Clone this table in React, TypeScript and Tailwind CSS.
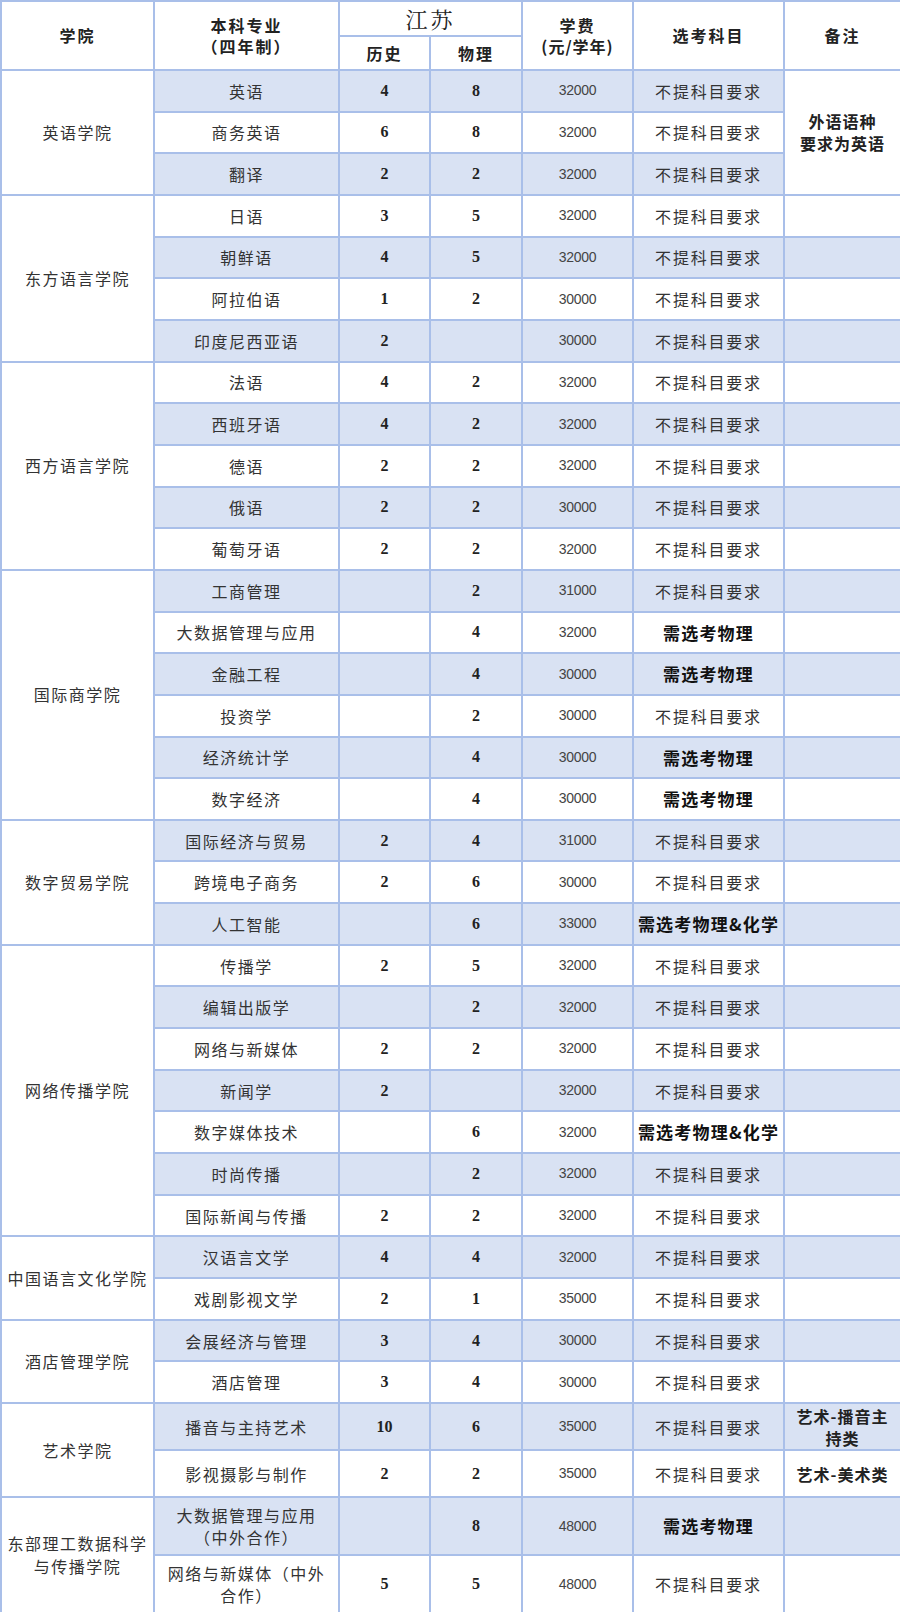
import React from "react";

type Req = "none" | "phy" | "phychem";

type Row = {
  major: React.ReactNode;
  h?: string;
  p?: string;
  fee: string;
  req: Req;
  note?: React.ReactNode;
};

type Group = {
  name: React.ReactNode;
  rowH: string;
  noteSpan?: React.ReactNode;
  rows: Row[];
};

const groups: Group[] = [
  {
    name: "英语学院",
    rowH: "h-[41.66px]",
    noteSpan: (
      <>
        外语语种
        <br />
        要求为英语
      </>
    ),
    rows: [
      { major: "英语", h: "4", p: "8", fee: "32000", req: "none" },
      { major: "商务英语", h: "6", p: "8", fee: "32000", req: "none" },
      { major: "翻译", h: "2", p: "2", fee: "32000", req: "none" },
    ],
  },
  {
    name: "东方语言学院",
    rowH: "h-[41.66px]",
    rows: [
      { major: "日语", h: "3", p: "5", fee: "32000", req: "none" },
      { major: "朝鲜语", h: "4", p: "5", fee: "32000", req: "none" },
      { major: "阿拉伯语", h: "1", p: "2", fee: "30000", req: "none" },
      { major: "印度尼西亚语", h: "2", fee: "30000", req: "none" },
    ],
  },
  {
    name: "西方语言学院",
    rowH: "h-[41.66px]",
    rows: [
      { major: "法语", h: "4", p: "2", fee: "32000", req: "none" },
      { major: "西班牙语", h: "4", p: "2", fee: "32000", req: "none" },
      { major: "德语", h: "2", p: "2", fee: "32000", req: "none" },
      { major: "俄语", h: "2", p: "2", fee: "30000", req: "none" },
      { major: "葡萄牙语", h: "2", p: "2", fee: "32000", req: "none" },
    ],
  },
  {
    name: "国际商学院",
    rowH: "h-[41.66px]",
    rows: [
      { major: "工商管理", p: "2", fee: "31000", req: "none" },
      { major: "大数据管理与应用", p: "4", fee: "32000", req: "phy" },
      { major: "金融工程", p: "4", fee: "30000", req: "phy" },
      { major: "投资学", p: "2", fee: "30000", req: "none" },
      { major: "经济统计学", p: "4", fee: "30000", req: "phy" },
      { major: "数字经济", p: "4", fee: "30000", req: "phy" },
    ],
  },
  {
    name: "数字贸易学院",
    rowH: "h-[41.66px]",
    rows: [
      { major: "国际经济与贸易", h: "2", p: "4", fee: "31000", req: "none" },
      { major: "跨境电子商务", h: "2", p: "6", fee: "30000", req: "none" },
      { major: "人工智能", p: "6", fee: "33000", req: "phychem" },
    ],
  },
  {
    name: "网络传播学院",
    rowH: "h-[41.66px]",
    rows: [
      { major: "传播学", h: "2", p: "5", fee: "32000", req: "none" },
      { major: "编辑出版学", p: "2", fee: "32000", req: "none" },
      { major: "网络与新媒体", h: "2", p: "2", fee: "32000", req: "none" },
      { major: "新闻学", h: "2", fee: "32000", req: "none" },
      { major: "数字媒体技术", p: "6", fee: "32000", req: "phychem" },
      { major: "时尚传播", p: "2", fee: "32000", req: "none" },
      { major: "国际新闻与传播", h: "2", p: "2", fee: "32000", req: "none" },
    ],
  },
  {
    name: "中国语言文化学院",
    rowH: "h-[41.66px]",
    rows: [
      { major: "汉语言文学", h: "4", p: "4", fee: "32000", req: "none" },
      { major: "戏剧影视文学", h: "2", p: "1", fee: "35000", req: "none" },
    ],
  },
  {
    name: "酒店管理学院",
    rowH: "h-[41.66px]",
    rows: [
      { major: "会展经济与管理", h: "3", p: "4", fee: "30000", req: "none" },
      { major: "酒店管理", h: "3", p: "4", fee: "30000", req: "none" },
    ],
  },
  {
    name: "艺术学院",
    rowH: "h-[47px]",
    rows: [
      {
        major: "播音与主持艺术",
        h: "10",
        p: "6",
        fee: "35000",
        req: "none",
        note: (
          <>
            艺术-播音主
            <br />
            持类
          </>
        ),
      },
      {
        major: "影视摄影与制作",
        h: "2",
        p: "2",
        fee: "35000",
        req: "none",
        note: "艺术-美术类",
      },
    ],
  },
  {
    name: (
      <>
        东部理工数据科学
        <br />
        与传播学院
      </>
    ),
    rowH: "h-[58px]",
    rows: [
      {
        major: (
          <>
            大数据管理与应用
            <br />
            （中外合作）
          </>
        ),
        p: "8",
        fee: "48000",
        req: "phy",
      },
      {
        major: (
          <>
            网络与新媒体（中外
            <br />
            合作）
          </>
        ),
        h: "5",
        p: "5",
        fee: "48000",
        req: "none",
      },
    ],
  },
];

const cell = "border-2 border-[#a9bfe9] text-center align-middle p-0";
const cjk = "font-['Noto_Sans_CJK_SC',sans-serif]";
const head = `${cell} ${cjk} font-bold text-[16px] tracking-[2px] text-[#222] leading-[21px]`;

function ReqText({ req }: { req: Req }) {
  if (req === "none") {
    return <span className="text-[16px] tracking-[1.8px] text-[#333]">不提科目要求</span>;
  }
  return (
    <span className="whitespace-nowrap text-[17px] font-bold tracking-[1.2px] text-[#111]">
      {req === "phy" ? "需选考物理" : "需选考物理&化学"}
    </span>
  );
}

export default function App() {
  let idx = 0;
  return (
    <div className="w-[900px] bg-white">
      <table className="w-[900px] table-fixed border-collapse">
        <colgroup>
          <col className="w-[153px]" />
          <col className="w-[185px]" />
          <col className="w-[91px]" />
          <col className="w-[92px]" />
          <col className="w-[111px]" />
          <col className="w-[151px]" />
          <col className="w-[117px]" />
        </colgroup>
        <thead>
          <tr className="h-[33px]">
            <th rowSpan={2} className={head}>
              学院
            </th>
            <th rowSpan={2} className={head}>
              本科专业
              <br />
              （四年制）
            </th>
            <th
              colSpan={2}
              className={`${cell} font-['Noto_Serif_CJK_SC','Noto_Sans_CJK_SC',serif] text-[22px] font-normal tracking-[3px] text-[#222]`}
            >
              江苏
            </th>
            <th rowSpan={2} className={head}>
              学费
              <br />
              <span className="tracking-[1px]">(元/学年)</span>
            </th>
            <th rowSpan={2} className={head}>
              选考科目
            </th>
            <th rowSpan={2} className={head}>
              备注
            </th>
          </tr>
          <tr className="h-[34px]">
            <th className={head}>历史</th>
            <th className={head}>物理</th>
          </tr>
        </thead>
        <tbody>
          {groups.map((g, gi) =>
            g.rows.map((r, ri) => {
              const shade = idx % 2 === 0 ? "bg-[#d9e2f3]" : "bg-white";
              idx++;
              return (
                <tr key={`${gi}-${ri}`} className={g.rowH}>
                  {ri === 0 && (
                    <td
                      rowSpan={g.rows.length}
                      className={`${cell} ${cjk} bg-white px-1 text-[16px] leading-[23px] tracking-[1.5px] text-[#333]`}
                    >
                      {g.name}
                    </td>
                  )}
                  <td className={`${cell} ${shade} ${cjk} text-[16px] leading-[22px] tracking-[1.5px] text-[#333]`}>
                    {r.major}
                  </td>
                  <td className={`${cell} ${shade} font-['Liberation_Serif',serif] text-[16px] font-bold text-[#222]`}>
                    {r.h ?? ""}
                  </td>
                  <td className={`${cell} ${shade} font-['Liberation_Serif',serif] text-[16px] font-bold text-[#222]`}>
                    {r.p ?? ""}
                  </td>
                  <td className={`${cell} ${shade} font-['Liberation_Sans',sans-serif] text-[14px] tracking-[-0.3px] text-[#444]`}>
                    {r.fee}
                  </td>
                  <td className={`${cell} ${shade} ${cjk}`}>
                    <ReqText req={r.req} />
                  </td>
                  {g.noteSpan ? (
                    ri === 0 && (
                      <td
                        rowSpan={g.rows.length}
                        className={`${cell} bg-white ${cjk} text-[16px] font-bold leading-[22px] tracking-[1px] text-[#222]`}
                      >
                        {g.noteSpan}
                      </td>
                    )
                  ) : (
                    <td
                      className={`${cell} ${shade} ${cjk} text-[16px] font-bold leading-[22px] tracking-[1px] text-[#222]`}
                    >
                      {r.note ?? ""}
                    </td>
                  )}
                </tr>
              );
            })
          )}
        </tbody>
      </table>
    </div>
  );
}
